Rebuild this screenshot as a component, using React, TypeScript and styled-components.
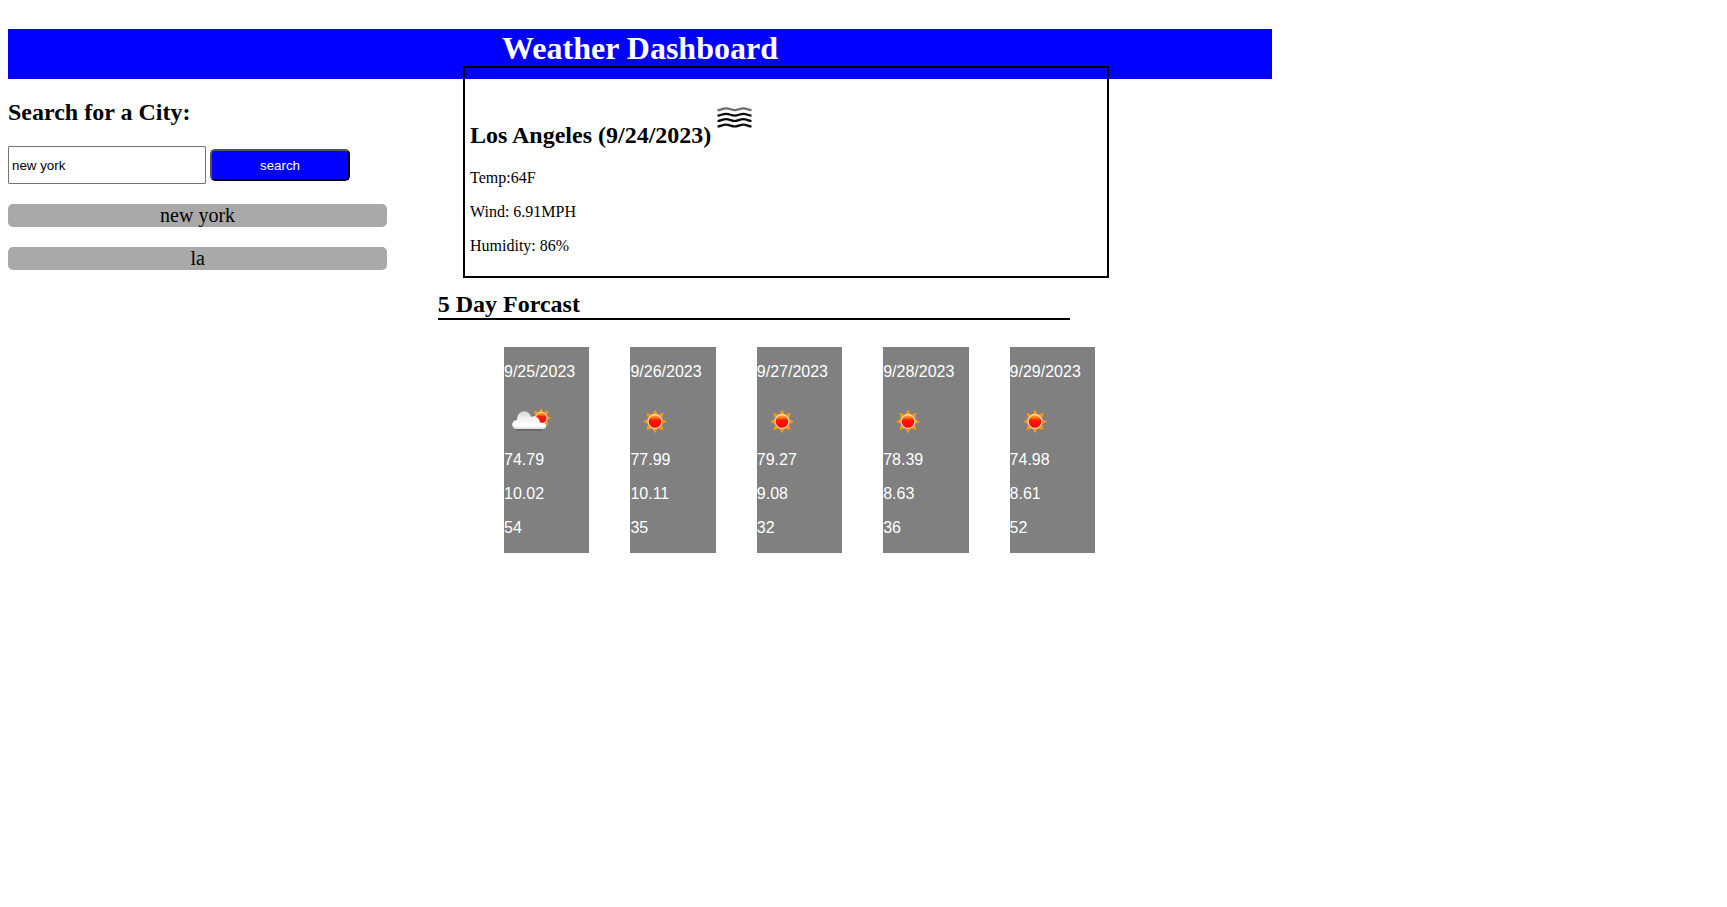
import { useId, useState, type FormEvent } from "react";
import styled, { createGlobalStyle } from "styled-components";

const serif = `"Liberation Serif", "Times New Roman", serif`;
const sans = `"Liberation Sans", Arial, sans-serif`;

const GlobalStyle = createGlobalStyle`
  body {
    margin: 8px;
    background: #fff;
    color: #000;
    font: 16px/18px ${serif};
  }
`;

const Page = styled.div`
  max-width: 1264px;
  padding-top: 21px;
`;

const Header = styled.header`
  height: 50px;
  background: #00f;
  color: #fff;
  text-align: center;
`;

const Title = styled.h1`
  margin: 0;
  font-size: 32px;
  line-height: 38px;
`;

const Columns = styled.div`
  display: flex;
  align-items: flex-start;
`;

const Sidebar = styled.aside`
  width: 30%;
  margin-right: 4%;
  padding-top: 20px;
`;

const Heading = styled.h2`
  margin: 0;
  font-size: 24px;
  line-height: 27px;
`;

const SearchLabel = styled.label`
  display: block;
`;

const SearchForm = styled.form`
  display: flex;
  flex-wrap: wrap;
  align-items: center;
  gap: 4px;
  margin: 20px 0;
`;

const SearchInput = styled.input`
  box-sizing: border-box;
  width: 198px;
  height: 38px;
  padding: 1px 3px;
  border: 1px solid #767676;
  border-radius: 1px;
  font-family: ${sans};
`;

const SearchButton = styled.button`
  width: 140px;
  height: 32px;
  border: 2px outset #000;
  border-radius: 5px;
  background: #00f;
  color: #fff;
  font-family: ${sans};
`;

const History = styled.ul`
  display: grid;
  gap: 20px;
  margin: 0;
  padding: 0;
  list-style: none;
`;

const HistoryButton = styled.button`
  display: block;
  width: 100%;
  padding: 0;
  border: 0;
  border-radius: 5px;
  background: #a9a9a9;
  color: #000;
  font: 20px/23px ${serif};
`;

const Content = styled.main`
  width: 50%;
`;

const CurrentCard = styled.section`
  width: 100%;
  margin: -13px 0 13px 4%;
  padding: 5px;
  border: 2px solid #000;
`;

const CityHeading = styled(Heading)`
  margin: 20px 0;

  svg {
    vertical-align: baseline;
  }
`;

const Reading = styled.p`
  margin: 16px 0;
`;

const ForecastHeading = styled(Heading)`
  border-bottom: 2px solid #000;
`;

const ForecastList = styled.ul`
  box-sizing: border-box;
  display: grid;
  grid-template-columns: repeat(5, 1fr);
  gap: 41px;
  width: 100%;
  margin: 27px 0 0 4%;
  padding: 0 0 0 41px;
  list-style: none;
`;

const DayCard = styled.li`
  display: flex;
  flex-direction: column;
  gap: 16px;
  padding: 16px 0;
  background: #808080;
  color: #fff;
  font-family: ${sans};
`;

const DayText = styled.p`
  margin: 0;
`;

const IconAndTemp = styled.div`
  display: grid;
  gap: 4px;
`;

const SUN_RAYS =
  "M0-12 2.6-7H-2.6ZM0 12 2.6 7H-2.6ZM12 0 7 2.6V-2.6ZM-12 0-7 2.6V-2.6ZM8.6-8.6 7.2-3.2 3.2-7.2ZM-8.6-8.6-7.2-3.2-3.2-7.2ZM8.6 8.6 7.2 3.2 3.2 7.2ZM-8.6 8.6-7.2 3.2-3.2 7.2Z";

function SunShape({ cx, cy, scale = 1 }: { cx: number; cy: number; scale?: number }) {
  const fill = useId();
  return (
    <g transform={`translate(${cx} ${cy}) scale(${scale})`}>
      <linearGradient id={fill} x1="0" y1="0" x2="0" y2="1">
        <stop offset="0" stopColor="#ffb02a" />
        <stop offset="0.22" stopColor="#ff7a18" />
        <stop offset="0.4" stopColor="#ff1a00" />
        <stop offset="1" stopColor="#ff0000" />
      </linearGradient>
      <path d={SUN_RAYS} fill="#ff960c" />
      <circle r="6.9" fill={`url(#${fill})`} stroke="#ffe8c0" strokeWidth="1.1" />
    </g>
  );
}

function ClearIcon() {
  return (
    <svg width="50" height="50" viewBox="0 0 50 50" role="img" aria-label="Clear sky">
      <SunShape cx={25} cy={24.5} />
    </svg>
  );
}

function FewCloudsIcon() {
  const fill = useId();
  return (
    <svg width="50" height="50" viewBox="0 0 50 50" role="img" aria-label="Few clouds">
      <linearGradient id={fill} x1="0" y1="0" x2="0" y2="1">
        <stop offset="0" stopColor="#d4d4d4" />
        <stop offset="0.4" stopColor="#f2f2f2" />
        <stop offset="0.8" stopColor="#ffffff" />
        <stop offset="1" stopColor="#e2e2e2" />
      </linearGradient>
      <SunShape cx={37.2} cy={21} scale={0.84} />
      <path d="M11 31H40L38 33.8H13Z" fill="#666" />
      <path
        d="M13 32C6.8 32 6.5 23.5 13 23C13 12.5 24.8 11.500 27.200 20C31 17.800 35.500 20.500 36 25.500C44 25 44 32 38.500 32Z"
        fill={`url(#${fill})`}
      />
    </svg>
  );
}

function MistIcon() {
  const wave = "c3 0 5-1.8 8.5-1.8s5.500 1.800 8.700 1.800 5.200-1.800 8.700-1.800 5 1.800 8.100 1.800";
  return (
    <svg width="50" height="50" viewBox="0 0 50 50" role="img" aria-label="Mist">
      <g fill="none" stroke="#0a0a0a" strokeWidth="2.2">
        <path d={`M6.5 17.2${wave}`} stroke="#6c6c6c" />
        <path d={`M6.5 22.6${wave}`} />
        <path d={`M6.5 28${wave}`} />
        <path d={`M6.5 33.5${wave}`} />
      </g>
    </svg>
  );
}

const DAYS = [
  { date: "9/25/2023", cloudy: true, temp: "74.79", wind: "10.02", humidity: "54" },
  { date: "9/26/2023", cloudy: false, temp: "77.99", wind: "10.11", humidity: "35" },
  { date: "9/27/2023", cloudy: false, temp: "79.27", wind: "9.08", humidity: "32" },
  { date: "9/28/2023", cloudy: false, temp: "78.39", wind: "8.63", humidity: "36" },
  { date: "9/29/2023", cloudy: false, temp: "74.98", wind: "8.61", humidity: "52" },
];

export default function App() {
  const [query, setQuery] = useState("new york");
  const [cities, setCities] = useState(["new york", "la"]);

  const search = (event: FormEvent) => {
    event.preventDefault();
    const city = query.trim();
    if (city && !cities.includes(city)) setCities([...cities, city]);
  };

  return (
    <>
      <GlobalStyle />
      <Page>
        <Header>
          <Title>Weather Dashboard</Title>
        </Header>
        <Columns>
          <Sidebar>
            <Heading>
              <SearchLabel htmlFor="city">Search for a City:</SearchLabel>
            </Heading>
            <SearchForm onSubmit={search}>
              <SearchInput
                id="city"
                type="text"
                value={query}
                onChange={(event) => setQuery(event.target.value)}
              />
              <SearchButton type="submit">search</SearchButton>
            </SearchForm>
            <History>
              {cities.map((city) => (
                <li key={city}>
                  <HistoryButton type="button" onClick={() => setQuery(city)}>
                    {city}
                  </HistoryButton>
                </li>
              ))}
            </History>
          </Sidebar>
          <Content>
            <CurrentCard>
              <CityHeading>
                Los Angeles (9/24/2023)
                <MistIcon />
              </CityHeading>
              <Reading>Temp:64F</Reading>
              <Reading>Wind: 6.91MPH</Reading>
              <Reading>Humidity: 86%</Reading>
            </CurrentCard>
            <ForecastHeading>5 Day Forcast</ForecastHeading>
            <ForecastList>
              {DAYS.map((day) => (
                <DayCard key={day.date}>
                  <DayText>{day.date}</DayText>
                  <IconAndTemp>
                    {day.cloudy ? <FewCloudsIcon /> : <ClearIcon />}
                    <DayText>{day.temp}</DayText>
                  </IconAndTemp>
                  <DayText>{day.wind}</DayText>
                  <DayText>{day.humidity}</DayText>
                </DayCard>
              ))}
            </ForecastList>
          </Content>
        </Columns>
      </Page>
    </>
  );
}
